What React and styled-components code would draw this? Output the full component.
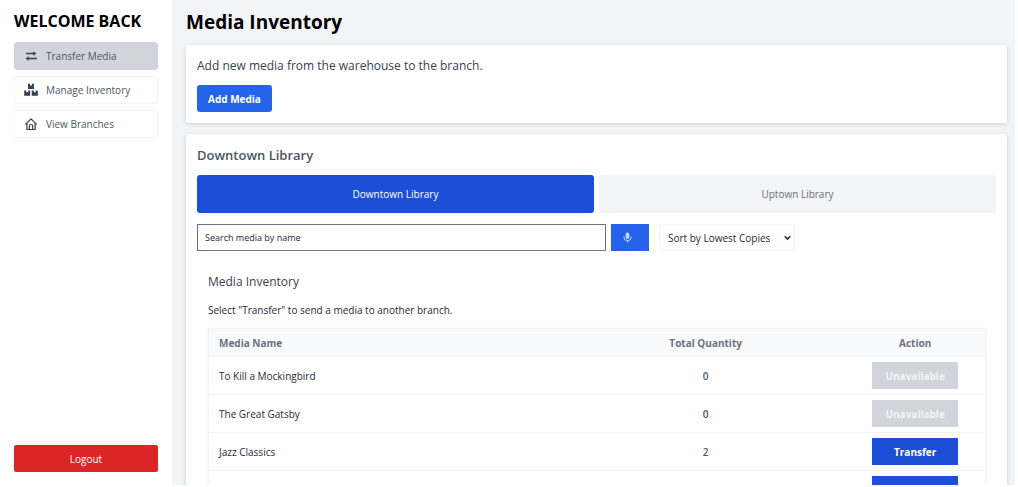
import React from "react";
import styled, { createGlobalStyle } from "styled-components";

const GlobalStyle = createGlobalStyle`
  *, *::before, *::after { box-sizing: border-box; }
  body {
    margin: 0;
    background: #fff;
    color: #000;
    font-family: "Open Sans", "Noto Sans", sans-serif;
    font-size: 10px;
    line-height: 16px;
  }
  h1, h2, h3, p, ul { margin: 0; padding: 0; }
  button, input, select { font: inherit; }
`;

const Page = styled.div`
  display: flex;
  height: 100vh;
  padding: 0 3px 2px 0;
`;

const Sidebar = styled.aside`
  display: flex;
  flex-direction: column;
  flex: none;
  width: 172px;
  padding: 10px 14px 13px;
  background: #fff;
`;

const Welcome = styled.h2`
  margin-bottom: 10px;
  font-size: 16px;
  font-weight: 700;
  line-height: 22px;
  white-space: nowrap;
`;

const NavList = styled.ul`
  display: flex;
  flex-direction: column;
  gap: 6px;
  list-style: none;
`;

const NavLink = styled.a`
  display: flex;
  align-items: center;
  gap: 8px;
  height: 28px;
  padding: 0 9px;
  border: 1px solid ${(p) => (p.$active ? "#d1d5db" : "#f3f4f6")};
  border-radius: 3px;
  background: ${(p) => (p.$active ? "#d1d5db" : "#fff")};
  color: #4b5563;
  text-decoration: none;

  svg {
    flex: none;
    width: 14px;
    height: 14px;
    color: #374151;
  }
`;

const LogoutButton = styled.button`
  height: 27px;
  margin-top: auto;
  padding: 0;
  border: 0;
  border-radius: 2px;
  background: #dc2626;
  color: #fff;
`;

const Main = styled.main`
  display: flex;
  flex-direction: column;
  gap: 11px;
  flex: 1;
  min-width: 0;
  overflow: hidden;
  padding: 11px 8px 0 14px;
  background: #f3f4f6;
`;

const PageTitle = styled.h1`
  font-size: 19px;
  font-weight: 700;
  line-height: 23px;
`;

const Card = styled.section`
  flex: none;
  padding: 11px;
  border-radius: 2px;
  background: #fff;
  box-shadow: 0 1px 4px rgba(0, 0, 0, 0.16);
`;

const Lead = styled.h2`
  margin-bottom: 10px;
  color: #374151;
  font-size: 12px;
  font-weight: 500;
  line-height: 19px;
`;

const AddButton = styled.button`
  display: block;
  height: 27px;
  padding: 0 11px;
  border: 0;
  border-radius: 3px;
  background: #2563eb;
  color: #fff;
  font-weight: 700;
`;

const BranchTitle = styled.h2`
  margin-bottom: 9px;
  color: #4b5563;
  font-size: 13px;
  font-weight: 600;
  line-height: 21px;
`;

const Tabs = styled.div`
  display: flex;
  gap: 5px;
  margin-bottom: 11px;
`;

const Tab = styled.button`
  flex: 1;
  height: 38px;
  border: 0;
  border-radius: 3px;
  background: ${(p) => (p.$active ? "#1d4ed8" : "#f3f4f6")};
  color: ${(p) => (p.$active ? "#fff" : "#6b7280")};
`;

const Filters = styled.form`
  display: flex;
  height: 27px;
  margin-bottom: 21px;
`;

const SearchInput = styled.input`
  flex: 0 1 409px;
  min-width: 0;
  padding: 0 7px;
  border: 1px solid #6b7280;
  border-radius: 0;
  font-size: 9px;

  &::placeholder { color: #1f2937; opacity: 1; }
`;

const MicButton = styled.button`
  display: flex;
  align-items: center;
  flex: none;
  width: 38px;
  margin: 0 10px 0 5px;
  padding: 0 12px;
  border: 0;
  background: #2563eb;
  color: #bfdbfe;
`;

const SortBox = styled.div`
  position: relative;
  flex: none;
  width: 136px;

  svg {
    position: absolute;
    top: 11px;
    right: 4px;
    pointer-events: none;
  }
`;

const SortSelect = styled.select`
  width: 100%;
  height: 100%;
  padding: 0 8px;
  border: 1px solid #f3f4f6;
  border-radius: 2px;
  background: #fff;
  color: #1f2937;
  font-weight: 500;
  appearance: none;
`;

const Inventory = styled.section`
  padding: 0 10px 0 11px;
`;

const InventoryTitle = styled.h3`
  margin-bottom: 10px;
  color: #374151;
  font-size: 12px;
  font-weight: 500;
  line-height: 20px;
`;

const Hint = styled.p`
  margin-bottom: 10px;
  color: #1f2937;
  font-weight: 500;
`;

const Table = styled.table`
  width: 100%;
  table-layout: fixed;
  border-spacing: 0;
  border: 1px solid #f3f4f6;
  box-shadow: 0 1px 3px rgba(0, 0, 0, 0.08);
`;

const HeadCell = styled.th`
  width: ${(p) => p.$width};
  height: 28px;
  padding: 0 10px;
  border-bottom: 1px solid #f3f4f6;
  background: #f9fafb;
  color: #6b7280;
  font-weight: 700;
  text-align: ${(p) => p.$align || "center"};
`;

const Cell = styled.td`
  height: 38px;
  padding: 0 10px;
  border-bottom: 1px solid #f3f4f6;
  color: ${(p) => (p.$muted ? "#4b5563" : "#1f2937")};
  font-weight: ${(p) => (p.$muted ? 600 : 500)};
  text-align: ${(p) => p.$align || "center"};
`;

const ActionButton = styled.button`
  display: block;
  width: 86px;
  height: 27px;
  margin: 0 auto;
  padding: 0;
  border: 0;
  background: #1d4ed8;
  color: #fff;
  font-weight: 700;

  &:disabled { background: #d1d5db; color: #f3f4f6; }
`;

const TransferIcon = () => (
  <svg viewBox="0 0 14 14" aria-hidden="true">
    <path d="M2 4.5h8M4.5 9.500h8.500" stroke="currentColor" strokeWidth="1.300" fill="none" />
    <path d="M9.300 2.300l3.200 2.200-3.200 2.200zM4.700 7.300L1.500 9.500l3.200 2.200z" fill="currentColor" />
  </svg>
);

const BoxesIcon = () => (
  <svg viewBox="0 0 14 14" aria-hidden="true">
    <path
      fill="currentColor"
      d="M4 .7h2v2l1-.6 1 .6v-2h2v5.300H4zM.2 7.500h2v2l1-.6 1 .6v-2h2v5.300h-6zM7.800 7.500h2v2l1-.6 1 .6v-2h2v5.300h-6z"
    />
  </svg>
);

const HomeIcon = () => (
  <svg viewBox="0 0 14 14" fill="none" stroke="currentColor" strokeWidth="1.200" strokeLinejoin="round" strokeLinecap="round" aria-hidden="true">
    <path d="M1.700 7.200L7 1.800l5.300 5.400M2.900 6.200v6.300h8.200V6.200" />
    <path d="M5.300 12.300V9.200a1.700 1.700 0 0 1 3.400 0v3.100" />
  </svg>
);

const MicIcon = () => (
  <svg width="9" height="11" viewBox="0 0 9 11" aria-hidden="true">
    <rect x="2.700" y="0.500" width="3.600" height="6.500" rx="1.800" fill="currentColor" />
    <path d="M1 4.500v1a3.500 3.200 0 0 0 7 0v-1M4.500 8.700v2" fill="none" stroke="currentColor" />
  </svg>
);

const Chevron = () => (
  <svg width="7" height="6" viewBox="0 0 7 6" aria-hidden="true">
    <path d="M0.800 1.200l2.700 2.800 2.700-2.800" fill="none" stroke="#1f2937" strokeWidth="1.600" />
  </svg>
);

const media = [
  { name: "To Kill a Mockingbird", quantity: 0 },
  { name: "The Great Gatsby", quantity: 0 },
  { name: "Jazz Classics", quantity: 2 },
  { name: "", quantity: null },
];

export default function App() {
  return (
    <>
      <GlobalStyle />
      <Page>
        <Sidebar>
          <Welcome>WELCOME BACK</Welcome>
          <nav>
            <NavList>
              <li><NavLink href="#transfer" $active aria-current="page"><TransferIcon />Transfer Media</NavLink></li>
              <li><NavLink href="#inventory"><BoxesIcon />Manage Inventory</NavLink></li>
              <li><NavLink href="#branches"><HomeIcon />View Branches</NavLink></li>
            </NavList>
          </nav>
          <LogoutButton type="button">Logout</LogoutButton>
        </Sidebar>
        <Main>
          <PageTitle>Media Inventory</PageTitle>
          <Card>
            <Lead>Add new media from the warehouse to the branch.</Lead>
            <AddButton type="button">Add Media</AddButton>
          </Card>
          <Card>
            <BranchTitle>Downtown Library</BranchTitle>
            <Tabs role="tablist">
              <Tab type="button" role="tab" aria-selected="true" $active>Downtown Library</Tab>
              <Tab type="button" role="tab" aria-selected="false">Uptown Library</Tab>
            </Tabs>
            <Filters onSubmit={(e) => e.preventDefault()}>
              <SearchInput type="text" placeholder="Search media by name" aria-label="Search media by name" />
              <MicButton type="button" aria-label="Voice search"><MicIcon /></MicButton>
              <SortBox>
                <SortSelect aria-label="Sort order">
                  <option>Sort by Lowest Copies</option>
                </SortSelect>
                <Chevron />
              </SortBox>
            </Filters>
            <Inventory>
              <InventoryTitle>Media Inventory</InventoryTitle>
              <Hint>Select "Transfer" to send a media to another branch.</Hint>
              <Table>
                <thead>
                  <tr>
                    <HeadCell $width="46%" $align="left">Media Name</HeadCell>
                    <HeadCell $width="36%">Total Quantity</HeadCell>
                    <HeadCell $width="18%">Action</HeadCell>
                  </tr>
                </thead>
                <tbody>
                  {media.map((item, i) => (
                    <tr key={i}>
                      <Cell $align="left">{item.name}</Cell>
                      <Cell $muted>{item.quantity}</Cell>
                      <Cell>
                        <ActionButton type="button" disabled={item.quantity === 0} aria-label={item.quantity === null ? "Transfer" : undefined}>
                          {item.quantity === null ? "" : item.quantity > 0 ? "Transfer" : "Unavailable"}
                        </ActionButton>
                      </Cell>
                    </tr>
                  ))}
                </tbody>
              </Table>
            </Inventory>
          </Card>
        </Main>
      </Page>
    </>
  );
}
